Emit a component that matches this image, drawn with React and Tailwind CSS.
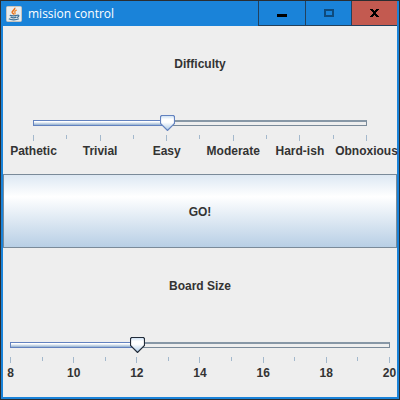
import { useState } from "react";

function JavaIcon() {
  return (
    <svg width="16" height="16" viewBox="0 0 16 16" aria-hidden="true">
      <rect x="0.5" y="0.5" width="15" height="15" rx="1" fill="#e9ecee" stroke="#c9c4bd" />
      <path d="M8.6 1.800C9.8 3.6 6 4.6 6.200 6.200C6.400 7.400 7.600 7.600 7.800 8.600" fill="none" stroke="#e8701a" strokeWidth="1.6" />
      <path d="M10.800 4C8.800 5 8.400 5.800 9 6.800C9.300 7.400 9 8 8.600 8.400" fill="none" stroke="#f08a2c" strokeWidth="1.300" />
      <path d="M3.800 9.200C5 10 9.800 10 11 9.200M4.600 11.200C6.400 12 8.800 12 10.400 11.200M11.200 9.300C13.600 8.600 13.200 11.200 10.900 11.500" fill="none" stroke="#3f7196" strokeWidth="1.300" />
      <path d="M2.800 12.800C5 14.200 10.600 14.100 12.800 12.800" fill="none" stroke="#3f7196" strokeWidth="1.300" />
    </svg>
  );
}

function Thumb({ stroke }) {
  const id = "thumb-" + stroke.slice(1);
  return (
    <svg width="15" height="16" viewBox="0 0 15 16" className="block" aria-hidden="true">
      <defs>
        <linearGradient id={id} x1="0" y1="0" x2="0" y2="1">
          <stop offset="0" stopColor="#c8ddf2" />
          <stop offset="0.25" stopColor="#ffffff" />
          <stop offset="0.45" stopColor="#ffffff" />
          <stop offset="1" stopColor="#a9c8e6" />
        </linearGradient>
      </defs>
      <path d="M1.5 0.5H13.5L14.5 1.5V8.5L7.5 15.5L0.5 8.5V1.5Z" fill={`url(#${id})`} stroke={stroke} strokeWidth="1.2" />
    </svg>
  );
}

function TickSlider({ label, min, max, initial, labels, inset, stroke }) {
  const [value, setValue] = useState(initial);
  const percent = ((value - min) / (max - min)) * 100;
  return (
    <div className={`flex flex-col justify-center ${inset}`}>
      <div className="relative flex h-4 items-center">
        <div className="h-1.5 w-full border border-t-2 border-[#7a8a99] border-t-[#8797a6] bg-[#eeeeee]" />
        <div
          className="absolute left-0 top-[5px] h-1.5 border border-[#6382bf] bg-linear-to-b from-white from-20% to-[#93b0cf]"
          style={{ width: `${percent}%` }}
        />
        <div className="absolute top-0 -ml-[7px]" style={{ left: `${percent}%` }}>
          <Thumb stroke={stroke} />
        </div>
        <input
          type="range"
          aria-label={label}
          min={min}
          max={max}
          value={value}
          onChange={(e) => setValue(Number(e.target.value))}
          className="absolute inset-0 m-0 h-4 w-full cursor-pointer opacity-0"
        />
      </div>
      <div className="mt-1 flex justify-between">
        {labels.map((text, i) => (
          <div key={i} className="flex w-px flex-col items-center">
            <div className={`w-px bg-[#a3b8cc] ${text ? "h-1.5" : "h-1"}`} />
            {text && <span className="mt-0.5 whitespace-nowrap leading-4">{text}</span>}
          </div>
        ))}
      </div>
    </div>
  );
}

const difficulties = ["Pathetic", "", "Trivial", "", "Easy", "", "Moderate", "", "Hard-ish", "", "Obnoxious"];
const sizes = ["8", "", "10", "", "12", "", "14", "", "16", "", "18", "", "20"];

export default function App() {
  return (
    <div className="flex min-h-screen flex-col border border-[#2b2d30] bg-[#1a83d9] px-0.5 pb-0.5">
      <header className="flex h-[25px] justify-between">
        <div className="flex items-center gap-1.5 pl-[3px] font-['Open_Sans','Noto_Sans',sans-serif] text-xs text-white">
          <JavaIcon />
          <h1>mission control</h1>
        </div>
        <div className="flex border-b border-l border-[#22405c]">
          <button aria-label="Minimize" className="flex w-[47px] items-center justify-center border-r border-[#22405c]">
            <span className="mt-1 h-[3px] w-2.5 bg-black" />
          </button>
          <button aria-label="Maximize" className="flex w-[46px] items-center justify-center border-r border-[#22405c]">
            <span className="h-2 w-2.5 border-2 border-[#0e4a7c]" />
          </button>
          <button aria-label="Close" className="flex w-[45px] items-center justify-center bg-[#c35a50]">
            <svg width="9" height="8" viewBox="0 0 9 8" shapeRendering="crispEdges" aria-hidden="true">
              <path d="M0 0H3V1H4V2H5V1H6V0H9V1H8V2H7V3H6V5H7V6H8V7H9V8H6V7H5V6H4V7H3V8H0V7H1V6H2V5H3V3H2V2H1V1H0Z" fill="#000" />
            </svg>
          </button>
        </div>
      </header>
      <main className="grid flex-1 auto-rows-[74px] content-start bg-[#eeeeee] font-['Liberation_Sans',Arial,sans-serif] text-xs font-bold text-[#333333]">
        <h2 className="flex items-center justify-center pt-0.5">Difficulty</h2>
        <TickSlider label="Difficulty" min={0} max={10} initial={4} labels={difficulties} inset="px-[30px]" stroke="#6382bf" />
        <button className="border border-[#7a8a99] bg-linear-to-b from-[#dde8f3] via-white via-30% to-[#b8cfe5] pt-0.5">GO!</button>
        <h2 className="flex items-center justify-center pt-0.5">Board Size</h2>
        <TickSlider label="Board Size" min={8} max={20} initial={12} labels={sizes} inset="px-[7px]" stroke="#222b38" />
      </main>
    </div>
  );
}
